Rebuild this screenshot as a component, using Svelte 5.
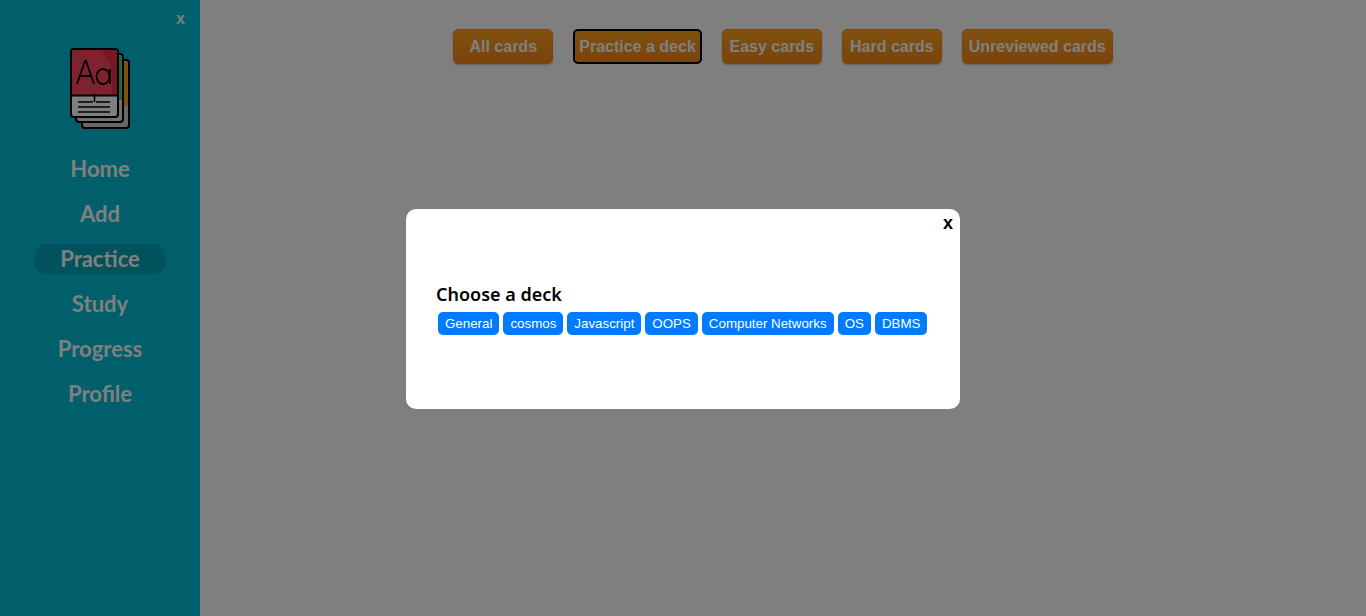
<script>
	const tabs = ['All cards', 'Practice a deck', 'Easy cards', 'Hard cards', 'Unreviewed cards'];
	const links = ['Home', 'Add', 'Practice', 'Study', 'Progress', 'Profile'];
	const decks = ['General', 'cosmos', 'Javascript', 'OOPS', 'Computer Networks', 'OS', 'DBMS'];
	let active = $state('Practice a deck');
	let page = $state('Practice');
</script>

<div class="layout">
	<aside class="sidebar">
		<button class="hide">x</button>
		<svg class="logo" viewBox="0 0 60 82" width="60" height="82" aria-hidden="true">
			<rect x="12" y="12" width="47" height="68" rx="3" fill="#d0d0d0" stroke="#000" stroke-width="2" />
			<rect x="53" y="14" width="5" height="44" fill="#f5a623" />
			<rect x="6" y="6" width="47" height="68" rx="3" fill="#e0e0e0" stroke="#000" stroke-width="2" />
			<rect x="47" y="8" width="5" height="44" fill="#4fc98f" />
			<rect x="1" y="1" width="47" height="68" rx="3" fill="#fff" stroke="#000" stroke-width="2" />
			<path d="M2 4a2 2 0 0 1 2-2h41a2 2 0 0 1 2 2v43H2z" fill="#ff4560" />
			<path d="M31 2h14a2 2 0 0 1 2 2v43H41c3-14 1-33-10-45z" fill="#e8304c" />
			<path d="M2 47.500h45" stroke="#000" stroke-width="2" />
			<path d="M7 36 15 13h1l8 23M10 28h11" fill="none" stroke="#000" stroke-width="1.800" />
			<ellipse cx="33" cy="28.500" rx="6.500" ry="7.500" fill="none" stroke="#000" stroke-width="1.800" />
			<path d="M40 21v15" stroke="#000" stroke-width="1.800" />
			<path d="M8 54h15M26 54h14M8 59h32M8 64h32M24.500 46v8" fill="none" stroke="#000" stroke-width="1.600" />
		</svg>
		<nav>
			{#each links as link}
				<a href="#{link}" class:current={page === link} onclick={() => (page = link)}>{link}</a>
			{/each}
		</nav>
	</aside>

	<main>
		<div class="tabs">
			{#each tabs as tab}
				<button class="tab" class:focused={active === tab} onclick={() => (active = tab)}>{tab}</button>
			{/each}
		</div>
	</main>
</div>

<div class="overlay">
	<div class="modal">
		<button class="close">x</button>
		<h3>Choose a deck</h3>
		<div class="decks">
			{#each decks as deck}
				<button class="deck">{deck}</button>
			{/each}
		</div>
	</div>
</div>

<style>
	:global(body) {
		background: #fff;
		font-family: 'Liberation Sans', Arial, sans-serif;
	}
	.layout {
		display: flex;
		height: 616px;
		overflow: hidden;
	}
	.sidebar {
		width: 200px;
		flex: none;
		background: #00bed6;
		display: flex;
		flex-direction: column;
		align-items: center;
	}
	.hide {
		align-self: flex-end;
		margin: 9px 15px 0 0;
		padding: 0;
		border: 0;
		background: none;
		color: #fff;
		font: bold 16px 'Liberation Sans', Arial, sans-serif;
		line-height: 20px;
	}
	.logo {
		margin-top: 19px;
	}
	nav {
		margin-top: 24px;
		display: flex;
		flex-direction: column;
		align-items: center;
		gap: 15px;
	}
	nav a {
		width: 130px;
		height: 30px;
		line-height: 30px;
		text-align: center;
		border-radius: 10px;
		color: #fff;
		text-decoration: none;
		font-family: Lato, 'Noto Sans', sans-serif;
		font-size: 22px;
		font-weight: 700;
	}
	nav a.current {
		background: #00a5b8;
	}
	main {
		flex: 1;
		background: #fff;
	}
	.tabs {
		display: flex;
		justify-content: center;
		gap: 20px;
		padding-top: 29px;
	}
	.tab {
		height: 35px;
		min-width: 100px;
		padding: 0 6px;
		border: 1px solid #f08c1e;
		border-radius: 5px;
		background: linear-gradient(#ffa31a, #f5871c);
		color: #fff;
		font: bold 16px 'Liberation Sans', Arial, sans-serif;
		box-shadow: 0 1px 2px rgba(0, 0, 0, 0.25);
	}
	.tab.focused {
		border: 2px solid #000;
		outline: none;
		padding: 0 4px;
		box-shadow: none;
	}
	.overlay {
		position: fixed;
		inset: 0;
		background: rgba(0, 0, 0, 0.5);
		display: flex;
		align-items: center;
		justify-content: center;
		padding-top: 2px;
		box-sizing: border-box;
	}
	.modal {
		position: relative;
		box-sizing: border-box;
		width: 554px;
		height: 200px;
		padding: 73px 30px 0;
		background: #fff;
		border-radius: 10px;
	}
	.close {
		position: absolute;
		top: 4px;
		right: 7px;
		padding: 0;
		border: 0;
		background: none;
		color: #000;
		font: bold 18px 'Liberation Sans', Arial, sans-serif;
		line-height: 20px;
	}
	h3 {
		margin: 0;
		font-family: 'Noto Sans', sans-serif;
		font-size: 18px;
		font-weight: 600;
		line-height: 24px;
		color: #000;
	}
	.decks {
		display: flex;
		gap: 4px;
		margin: 6px 0 0 2px;
	}
	.deck {
		height: 23px;
		padding: 0 7px;
		border: 0;
		border-radius: 5px;
		background: #007bff;
		color: #fff;
		font: 13.333px 'Liberation Sans', Arial, sans-serif;
		white-space: nowrap;
	}
</style>
